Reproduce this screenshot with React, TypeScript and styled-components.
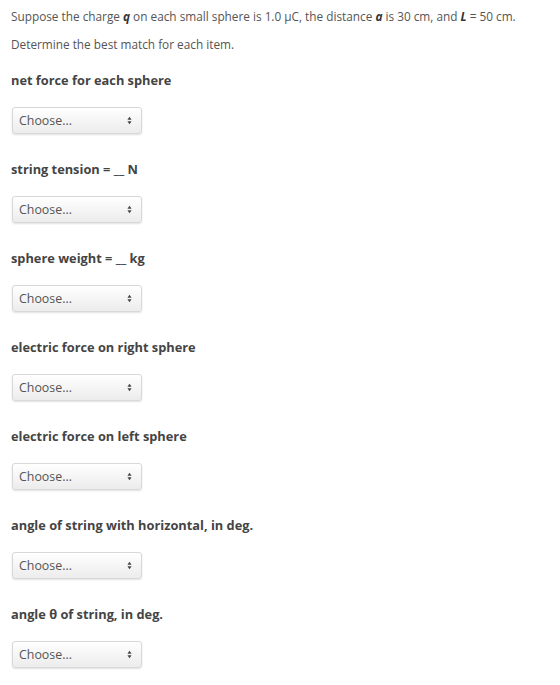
import styled, { createGlobalStyle } from "styled-components";

const GlobalStyle = createGlobalStyle`
  body {
    margin: 0;
    background: #fff;
    font-family: "Open Sans", "Liberation Sans", sans-serif;
    color: #4a4a4a;
  }
`;

const items = [
  { label: <>net force for each sphere</> },
  { label: <>string tension = __ N</> },
  { label: <>sphere weight = __ kg</> },
  { label: <>electric force on right sphere</> },
  { label: <>electric force on left sphere</> },
  { label: <>angle of string with horizontal, in deg.</> },
  { label: <>angle θ of string, in deg.</> },
];

function App() {
  return (
    <>
      <GlobalStyle />
      <Page>
        <Intro>
          Suppose the charge <Var>q</Var> on each small sphere is 1.0 μC, the
          distance <Var>a</Var> is 30 cm, and <Var>L</Var> = 50 cm.
        </Intro>
        <Intro>Determine the best match for each item.</Intro>
        <List>
          {items.map((item, i) => (
            <Item key={i}>
              <Label>{item.label}</Label>
              <SelectWrap>
                <Select defaultValue="">
                  <option value="">Choose...</option>
                </Select>
                <Arrows viewBox="0 0 6 10">
                  <path d="M3 0.5 L5.5 4 L0.5 4 Z" />
                  <path d="M3 9.5 L5.5 6 L0.5 6 Z" />
                </Arrows>
              </SelectWrap>
            </Item>
          ))}
        </List>
      </Page>
    </>
  );
}

export default App;

const Page = styled.div`
  padding: 8px 11px;
`;

const Intro = styled.p`
  margin: 0 0 12px;
  font-size: 11.8px;
  line-height: 16px;
  color: #555;
`;

const Var = styled.b`
  font-style: italic;
  color: #333;
`;

const List = styled.div`
  display: flex;
  flex-direction: column;
  gap: 26px;
  margin-top: 19px;
`;

const Item = styled.div`
  display: flex;
  flex-direction: column;
  gap: 18px;
`;

const Label = styled.div`
  font-size: 12.8px;
  font-weight: 700;
  line-height: 18px;
  color: #444;
`;

const SelectWrap = styled.div`
  position: relative;
  margin-left: 1px;
  width: 130px;
  height: 27px;
`;

const Select = styled.select`
  appearance: none;
  width: 100%;
  height: 100%;
  box-sizing: border-box;
  padding: 0 20px 0 6px;
  font-family: "Open Sans", "Liberation Sans", sans-serif;
  font-size: 12.4px;
  color: #555;
  border: 1px solid #d8d8d8;
  border-radius: 3px;
  background: linear-gradient(#ffffff, #ececec);
  box-shadow: 0 1px 2px rgba(0, 0, 0, 0.12);
  outline: none;
`;

const Arrows = styled.svg`
  position: absolute;
  right: 10px;
  top: 9px;
  width: 5px;
  height: 9px;
  fill: #444;
  pointer-events: none;
`;
